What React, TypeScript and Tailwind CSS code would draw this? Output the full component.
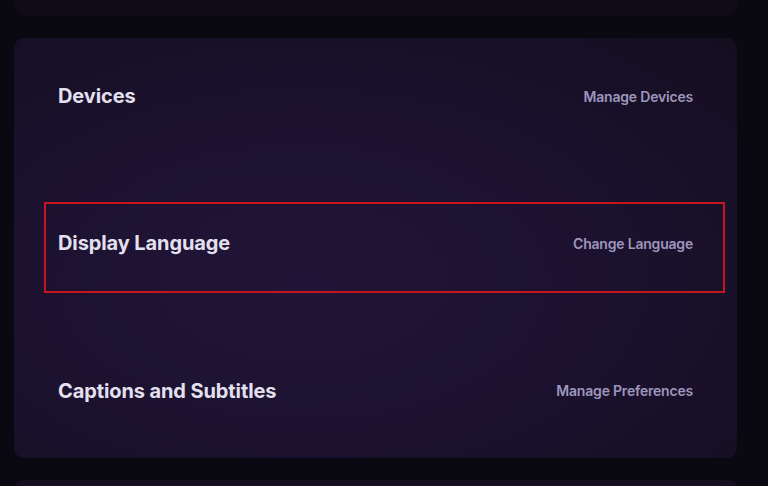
import React from 'react';

type Row = { title: string; action: string; focused?: boolean };

const ROWS: Row[] = [
  { title: 'Devices', action: 'Manage Devices' },
  { title: 'Display Language', action: 'Change Language', focused: true },
  { title: 'Captions and Subtitles', action: 'Manage Preferences' },
];

export default function App() {
  return (
    <div
      className="flex h-[486px] w-[768px] flex-col overflow-hidden bg-[#0a0811] pl-[14px] pr-[31px]"
      style={{ fontFamily: 'Inter, Roboto, "Noto Sans", sans-serif' }}
    >
      {/* previous card, only its bottom edge is visible */}
      <div className="h-[16px] shrink-0 rounded-b-[10px] bg-[#100b19]" />

      <section className="mt-[22px] flex h-[420px] shrink-0 flex-col gap-[57px] rounded-[10px] bg-[radial-gradient(ellipse_at_40%_58%,#211537_0%,#1c1230_45%,#140e20_100%)] pb-[18px] pl-[30px] pr-[12px] pt-[17px]">
        {ROWS.map((row) => (
          <SettingRow key={row.title} row={row} />
        ))}
      </section>

      {/* next card peeking in */}
      <div className="mt-[22px] h-[40px] shrink-0 rounded-t-[10px] bg-[#150f21]" />
    </div>
  );
}

function SettingRow({ row }: { row: Row }) {
  return (
    <div
      className={`flex h-[91px] items-center justify-between border-2 pb-2 pl-[12px] pr-[30px] ${
        row.focused ? 'border-[#c4161c]' : 'border-transparent'
      }`}
    >
      <span className="text-[20px] font-bold tracking-[-0.1px] text-[#e4e0f0]">{row.title}</span>
      <button type="button" className="text-[14px] font-semibold tracking-[-0.2px] text-[#9e96bd]">
        {row.action}
      </button>
    </div>
  );
}
